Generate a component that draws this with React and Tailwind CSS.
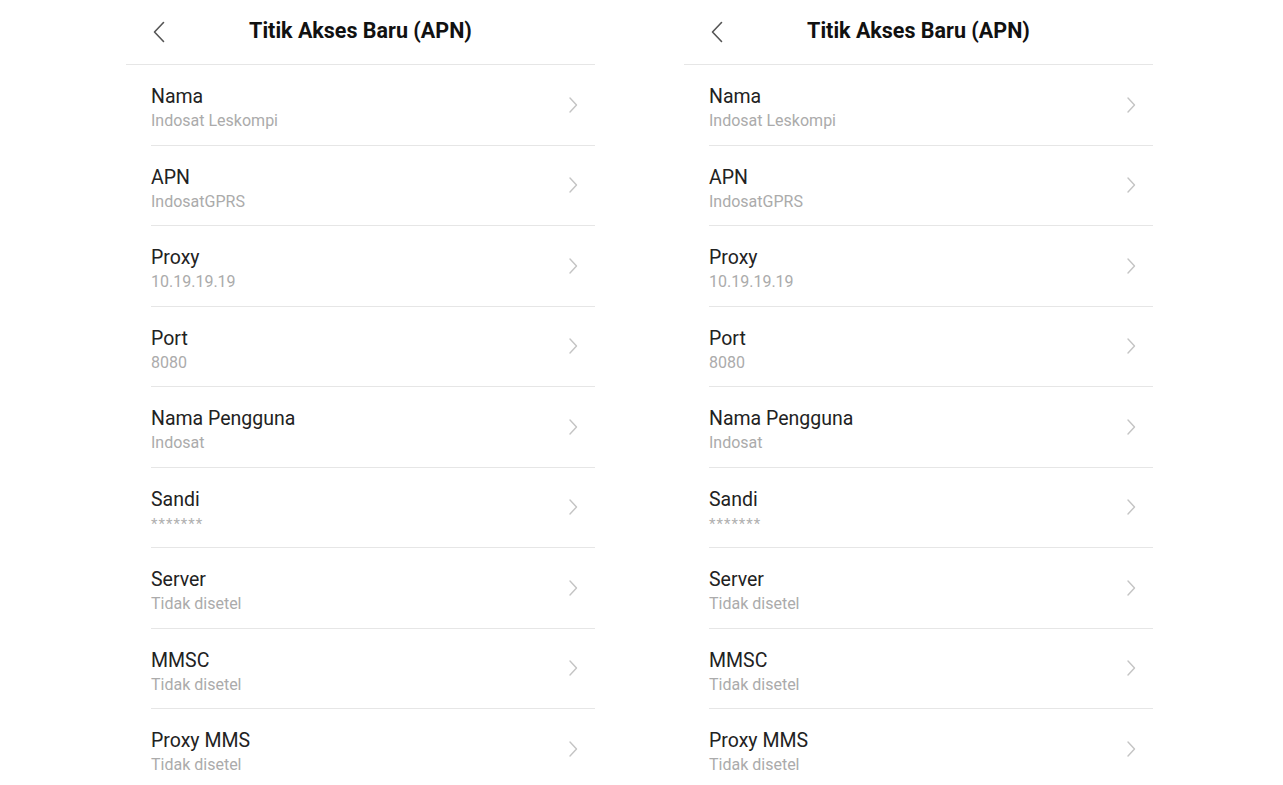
import React from "react";

const rows = [
  ["Nama", "Indosat Leskompi"],
  ["APN", "IndosatGPRS"],
  ["Proxy", "10.19.19.19"],
  ["Port", "8080"],
  ["Nama Pengguna", "Indosat"],
  ["Sandi", "*******"],
  ["Server", "Tidak disetel"],
  ["MMSC", "Tidak disetel"],
  ["Proxy MMS", "Tidak disetel"],
];

function Panel() {
  return (
    <div className="w-[469px] shrink-0">
      <div className="relative h-[65px] border-b border-[#e6e6e6] flex items-center justify-center">
        <svg className="absolute left-[26px] top-[21px]" width="14" height="22" viewBox="0 0 14 22" fill="none">
          <path d="M11.5 1.5 L2.5 11 L11.5 20.5" stroke="#555" strokeWidth="1.6" strokeLinecap="round" strokeLinejoin="round" />
        </svg>
        <div className="text-[21.5px] font-bold text-[#111] mt-[-2px]">Titik Akses Baru (APN)</div>
      </div>
      {rows.map(([t, s]) => (
        <div key={t} className="ml-[25px] h-[80.5px] border-b border-[#e6e6e6] flex items-center pr-[17px]">
          <div className="flex-1 flex flex-col mt-[9px]">
            <div className="text-[19.5px] leading-[24px] text-[#222]">{t}</div>
            <div className={s.startsWith("*") ? "text-[15px] leading-[24px] text-[#b0b0b0] tracking-[1px]" : "text-[16px] leading-[24px] text-[#ababab]"}>{s}</div>
          </div>
          <svg width="9" height="16" viewBox="0 0 9 16" fill="none">
            <path d="M1 1 L7.5 8 L1 15" stroke="#c4c4c4" strokeWidth="1.4" strokeLinecap="round" strokeLinejoin="round" />
          </svg>
        </div>
      ))}
    </div>
  );
}

export default function App() {
  return (
    <div className="w-[1283px] h-[785px] overflow-hidden bg-white flex pl-[126px] gap-[89px]" style={{ fontFamily: "Roboto, 'Noto Sans', sans-serif" }}>
      <Panel />
      <Panel />
    </div>
  );
}
